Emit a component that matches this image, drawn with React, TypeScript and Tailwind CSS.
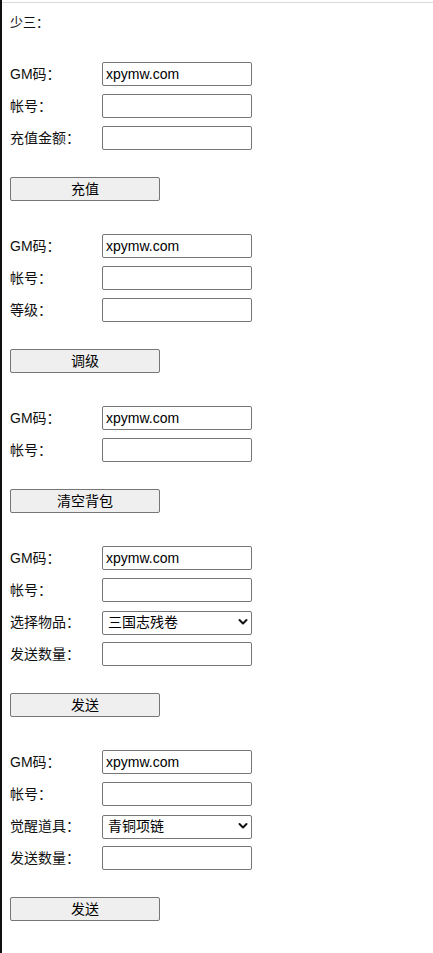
import { useState } from 'react';

type Row = { label: string; value?: string; options?: string[] };
type Section = { rows: Row[]; button: string };

const sections: Section[] = [
  {
    rows: [{ label: 'GM码：', value: 'xpymw.com' }, { label: '帐号：' }, { label: '充值金额：' }],
    button: '充值',
  },
  {
    rows: [{ label: 'GM码：', value: 'xpymw.com' }, { label: '帐号：' }, { label: '等级：' }],
    button: '调级',
  },
  {
    rows: [{ label: 'GM码：', value: 'xpymw.com' }, { label: '帐号：' }],
    button: '清空背包',
  },
  {
    rows: [
      { label: 'GM码：', value: 'xpymw.com' },
      { label: '帐号：' },
      { label: '选择物品：', options: ['三国志残卷'] },
      { label: '发送数量：' },
    ],
    button: '发送',
  },
  {
    rows: [
      { label: 'GM码：', value: 'xpymw.com' },
      { label: '帐号：' },
      { label: '觉醒道具：', options: ['青铜项链'] },
      { label: '发送数量：' },
    ],
    button: '发送',
  },
];

function Field({ row }: { row: Row }) {
  const [value, setValue] = useState(row.value ?? '');

  if (row.options) {
    return (
      <div className="relative w-[150px] h-[24px]">
        <select className="appearance-none w-full h-full border border-[#767676] rounded-[2px] bg-white pl-[5px] pr-6 text-[14px] text-black outline-none">
          {row.options.map(o => (
            <option key={o}>{o}</option>
          ))}
        </select>
        {/* dropdown chevron */}
        <svg
          className="pointer-events-none absolute right-[4px] top-[8px] w-[10px] h-[8px]"
          viewBox="0 0 10 8"
          fill="none"
        >
          <path d="M1.5 2 L5 5.5 L8.5 2" stroke="#111" strokeWidth="2" strokeLinecap="round" strokeLinejoin="round" />
        </svg>
      </div>
    );
  }

  return (
    <input
      type="text"
      value={value}
      onChange={e => setValue(e.target.value)}
      className="w-[150px] h-[24px] border border-[#767676] rounded-[2px] bg-white px-[3px] text-[14px] text-black outline-none"
    />
  );
}

export default function App() {
  return (
    <div className="min-h-[953px] bg-white border-l-2 border-[#111] pt-[2px] font-['Liberation_Sans','Noto_Sans_CJK_SC',sans-serif] text-[#111]">
      <div className="border-t border-[#dadada] px-[8px]">
        <div className="mt-[10px] h-[20px] leading-[20px] text-[13px]">少三：</div>

        <div className="mt-[29px]">
          {sections.map((s, i) => (
            <div key={i} className="mb-[33px]">
              <div className="flex flex-col gap-[8px]">
                {s.rows.map((r, j) => (
                  <div key={j} className="flex items-center h-[24px]">
                    <span className="w-[92px] text-[14px]">{r.label}</span>
                    <Field row={r} />
                  </div>
                ))}
              </div>
              <button className="mt-[27px] w-[150px] h-[24px] border border-[#767676] rounded-[2px] bg-[#efefef] text-[14px] text-black">
                {s.button}
              </button>
            </div>
          ))}
        </div>
      </div>
    </div>
  );
}
